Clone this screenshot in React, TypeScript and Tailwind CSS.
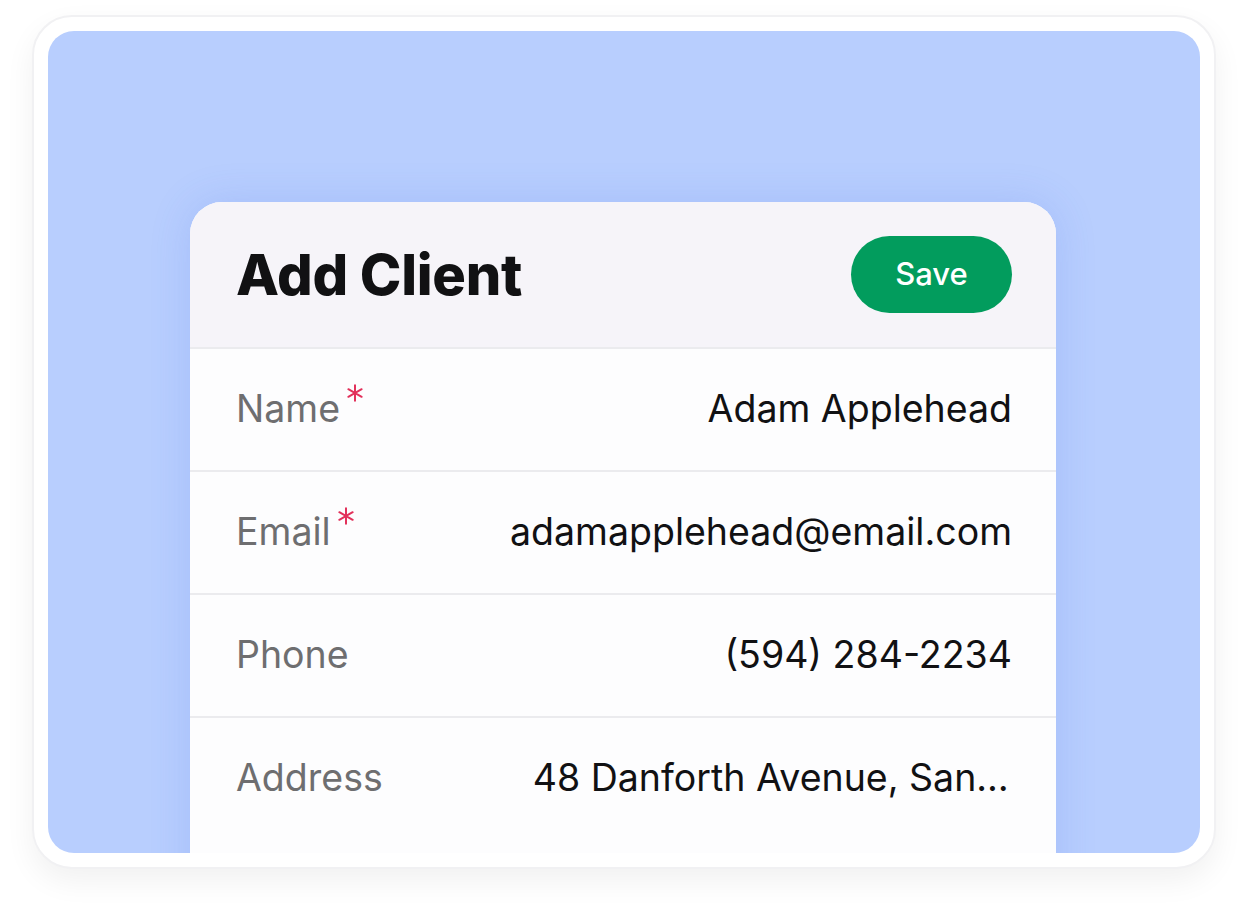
const rows = [
  { label: 'Name', value: 'Adam Applehead', required: true },
  { label: 'Email', value: 'adamapplehead@email.com', required: true },
  { label: 'Phone', value: '(594) 284-2234', required: false },
  { label: 'Address', value: '48 Danforth Avenue, San Francisco, CA 94110', required: false },
]

function FieldRow({ label, value, required }: { label: string; value: string; required: boolean }) {
  return (
    <div className="flex h-[123px] items-center justify-between gap-[150px] border-t-2 border-[#ebebee] pl-[46px] pr-[44px]">
      <div className="flex shrink-0 items-start text-[37.5px] text-[#6e6e70]">
        {label}
        {required && (
          <svg viewBox="0 0 20 20" className="ml-[6px] mt-[3px] h-[18px] w-[18px]" stroke="#e2305a" strokeWidth="2.2" strokeLinecap="round">
            <path d="M10 1.5v17M2.6 5.75l14.8 8.5M2.6 14.25l14.8-8.5" />
          </svg>
        )}
      </div>
      <div className="min-w-0 truncate text-[37.5px] text-[#111113]">{value}</div>
    </div>
  )
}

export default function App() {
  return (
    <div className="min-h-[918px] bg-white px-[32px] pt-[15px] font-['Inter','Liberation_Sans',sans-serif]">
      <div className="rounded-[40px] border-2 border-[#f1f1f3] bg-white p-[14px] shadow-[0_12px_30px_rgba(0,0,0,0.06)]">
        <div className="h-[822px] overflow-hidden rounded-[26px] bg-[#b8cefe] pl-[142px] pt-[171px]">
          <div className="h-[700px] w-[866px] overflow-hidden rounded-t-[32px] bg-[#fdfdfe] shadow-[0_0_40px_rgba(70,110,230,0.18)]">
            <div className="flex h-[145px] items-center justify-between bg-[#f6f4f9] pl-[46px] pr-[44px]">
              <h1 className="text-[56px] font-extrabold tracking-[-0.005em] text-[#111113]">Add Client</h1>
              <button className="h-[77px] w-[161px] rounded-full bg-[#029c5d] text-[31px] font-medium text-white">
                Save
              </button>
            </div>
            {rows.map((r) => (
              <FieldRow key={r.label} {...r} />
            ))}
          </div>
        </div>
      </div>
    </div>
  )
}
